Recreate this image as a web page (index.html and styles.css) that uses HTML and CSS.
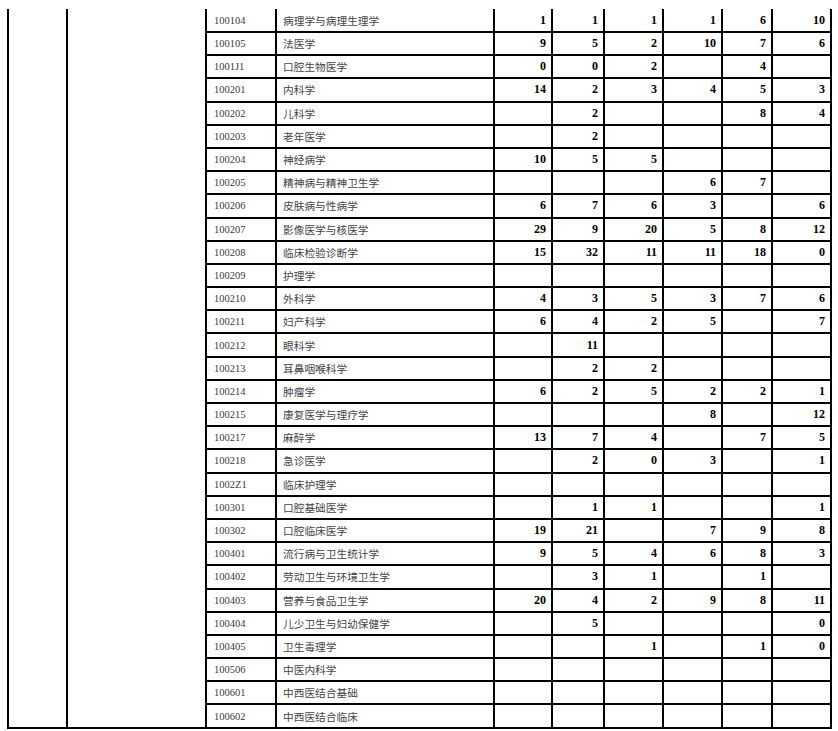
FILE: index.html
```html
<!DOCTYPE html>
<html lang="zh-CN">
<head>
<meta charset="utf-8">
<title>专业统计表</title>
<link rel="stylesheet" href="styles.css">
</head>
<body>
<table class="grid">
  <colgroup>
    <col class="c-a"><col class="c-b"><col class="c-code"><col class="c-name">
    <col class="c-n1"><col class="c-n2"><col class="c-n3"><col class="c-n4"><col class="c-n5"><col class="c-n6">
  </colgroup>
  <tbody>
    <tr><td class="blank" rowspan="31"></td><td class="blank" rowspan="31"></td><td class="code">100104</td><td class="name">病理学与病理生理学</td><td class="num">1</td><td class="num">1</td><td class="num">1</td><td class="num">1</td><td class="num">6</td><td class="num">10</td></tr>
    <tr><td class="code">100105</td><td class="name">法医学</td><td class="num">9</td><td class="num">5</td><td class="num">2</td><td class="num">10</td><td class="num">7</td><td class="num">6</td></tr>
    <tr><td class="code">1001J1</td><td class="name">口腔生物医学</td><td class="num">0</td><td class="num">0</td><td class="num">2</td><td class="num"></td><td class="num">4</td><td class="num"></td></tr>
    <tr><td class="code">100201</td><td class="name">内科学</td><td class="num">14</td><td class="num">2</td><td class="num">3</td><td class="num">4</td><td class="num">5</td><td class="num">3</td></tr>
    <tr><td class="code">100202</td><td class="name">儿科学</td><td class="num"></td><td class="num">2</td><td class="num"></td><td class="num"></td><td class="num">8</td><td class="num">4</td></tr>
    <tr><td class="code">100203</td><td class="name">老年医学</td><td class="num"></td><td class="num">2</td><td class="num"></td><td class="num"></td><td class="num"></td><td class="num"></td></tr>
    <tr><td class="code">100204</td><td class="name">神经病学</td><td class="num">10</td><td class="num">5</td><td class="num">5</td><td class="num"></td><td class="num"></td><td class="num"></td></tr>
    <tr><td class="code">100205</td><td class="name">精神病与精神卫生学</td><td class="num"></td><td class="num"></td><td class="num"></td><td class="num">6</td><td class="num">7</td><td class="num"></td></tr>
    <tr><td class="code">100206</td><td class="name">皮肤病与性病学</td><td class="num">6</td><td class="num">7</td><td class="num">6</td><td class="num">3</td><td class="num"></td><td class="num">6</td></tr>
    <tr><td class="code">100207</td><td class="name">影像医学与核医学</td><td class="num">29</td><td class="num">9</td><td class="num">20</td><td class="num">5</td><td class="num">8</td><td class="num">12</td></tr>
    <tr><td class="code">100208</td><td class="name">临床检验诊断学</td><td class="num">15</td><td class="num">32</td><td class="num">11</td><td class="num">11</td><td class="num">18</td><td class="num">0</td></tr>
    <tr><td class="code">100209</td><td class="name">护理学</td><td class="num"></td><td class="num"></td><td class="num"></td><td class="num"></td><td class="num"></td><td class="num"></td></tr>
    <tr><td class="code">100210</td><td class="name">外科学</td><td class="num">4</td><td class="num">3</td><td class="num">5</td><td class="num">3</td><td class="num">7</td><td class="num">6</td></tr>
    <tr><td class="code">100211</td><td class="name">妇产科学</td><td class="num">6</td><td class="num">4</td><td class="num">2</td><td class="num">5</td><td class="num"></td><td class="num">7</td></tr>
    <tr><td class="code">100212</td><td class="name">眼科学</td><td class="num"></td><td class="num">11</td><td class="num"></td><td class="num"></td><td class="num"></td><td class="num"></td></tr>
    <tr><td class="code">100213</td><td class="name">耳鼻咽喉科学</td><td class="num"></td><td class="num">2</td><td class="num">2</td><td class="num"></td><td class="num"></td><td class="num"></td></tr>
    <tr><td class="code">100214</td><td class="name">肿瘤学</td><td class="num">6</td><td class="num">2</td><td class="num">5</td><td class="num">2</td><td class="num">2</td><td class="num">1</td></tr>
    <tr><td class="code">100215</td><td class="name">康复医学与理疗学</td><td class="num"></td><td class="num"></td><td class="num"></td><td class="num">8</td><td class="num"></td><td class="num">12</td></tr>
    <tr><td class="code">100217</td><td class="name">麻醉学</td><td class="num">13</td><td class="num">7</td><td class="num">4</td><td class="num"></td><td class="num">7</td><td class="num">5</td></tr>
    <tr><td class="code">100218</td><td class="name">急诊医学</td><td class="num"></td><td class="num">2</td><td class="num">0</td><td class="num">3</td><td class="num"></td><td class="num">1</td></tr>
    <tr><td class="code">1002Z1</td><td class="name">临床护理学</td><td class="num"></td><td class="num"></td><td class="num"></td><td class="num"></td><td class="num"></td><td class="num"></td></tr>
    <tr><td class="code">100301</td><td class="name">口腔基础医学</td><td class="num"></td><td class="num">1</td><td class="num">1</td><td class="num"></td><td class="num"></td><td class="num">1</td></tr>
    <tr><td class="code">100302</td><td class="name">口腔临床医学</td><td class="num">19</td><td class="num">21</td><td class="num"></td><td class="num">7</td><td class="num">9</td><td class="num">8</td></tr>
    <tr><td class="code">100401</td><td class="name">流行病与卫生统计学</td><td class="num">9</td><td class="num">5</td><td class="num">4</td><td class="num">6</td><td class="num">8</td><td class="num">3</td></tr>
    <tr><td class="code">100402</td><td class="name">劳动卫生与环境卫生学</td><td class="num"></td><td class="num">3</td><td class="num">1</td><td class="num"></td><td class="num">1</td><td class="num"></td></tr>
    <tr><td class="code">100403</td><td class="name">营养与食品卫生学</td><td class="num">20</td><td class="num">4</td><td class="num">2</td><td class="num">9</td><td class="num">8</td><td class="num">11</td></tr>
    <tr><td class="code">100404</td><td class="name">儿少卫生与妇幼保健学</td><td class="num"></td><td class="num">5</td><td class="num"></td><td class="num"></td><td class="num"></td><td class="num">0</td></tr>
    <tr><td class="code">100405</td><td class="name">卫生毒理学</td><td class="num"></td><td class="num"></td><td class="num">1</td><td class="num"></td><td class="num">1</td><td class="num">0</td></tr>
    <tr><td class="code">100506</td><td class="name">中医内科学</td><td class="num"></td><td class="num"></td><td class="num"></td><td class="num"></td><td class="num"></td><td class="num"></td></tr>
    <tr><td class="code">100601</td><td class="name">中西医结合基础</td><td class="num"></td><td class="num"></td><td class="num"></td><td class="num"></td><td class="num"></td><td class="num"></td></tr>
    <tr><td class="code">100602</td><td class="name">中西医结合临床</td><td class="num"></td><td class="num"></td><td class="num"></td><td class="num"></td><td class="num"></td><td class="num"></td></tr>
  </tbody>
</table>
</body>
</html>
```

FILE: styles.css
```css
html, body {
  margin: 0;
  padding: 0;
  background: #fff;
}

body {
  padding: 9px 0 0 7px;
}

.grid {
  border-collapse: collapse;
  table-layout: fixed;
  width: 825px;
}

.c-a { width: 59px; }
.c-b { width: 139px; }
.c-code { width: 70px; }
.c-name { width: 218px; }
.c-n1 { width: 58px; }
.c-n2 { width: 52px; }
.c-n3 { width: 59px; }
.c-n4 { width: 59px; }
.c-n5 { width: 50px; }
.c-n6 { width: 59px; }

.grid tr {
  height: 23.2px;
}

.grid tr:first-child {
  height: 23px;
}

.grid td {
  border: 2px solid #000;
  padding: 0 5px 0 7px;
  vertical-align: middle;
  white-space: nowrap;
  overflow: hidden;
}

.grid tr:first-child td {
  border-top: 0;
}

.code {
  font-family: "Liberation Serif", "Noto Sans CJK SC", serif;
  font-size: 10.5px;
  color: #3a3a3a;
}

.name {
  font-family: "Noto Sans CJK SC", sans-serif;
  font-size: 10.7px;
  color: #444;
}

.grid td.name {
  padding-left: 6px;
}

.num {
  font-family: "Liberation Serif", "DejaVu Serif", serif;
  font-weight: bold;
  font-size: 12px;
  color: #000;
  text-align: right;
}
```
